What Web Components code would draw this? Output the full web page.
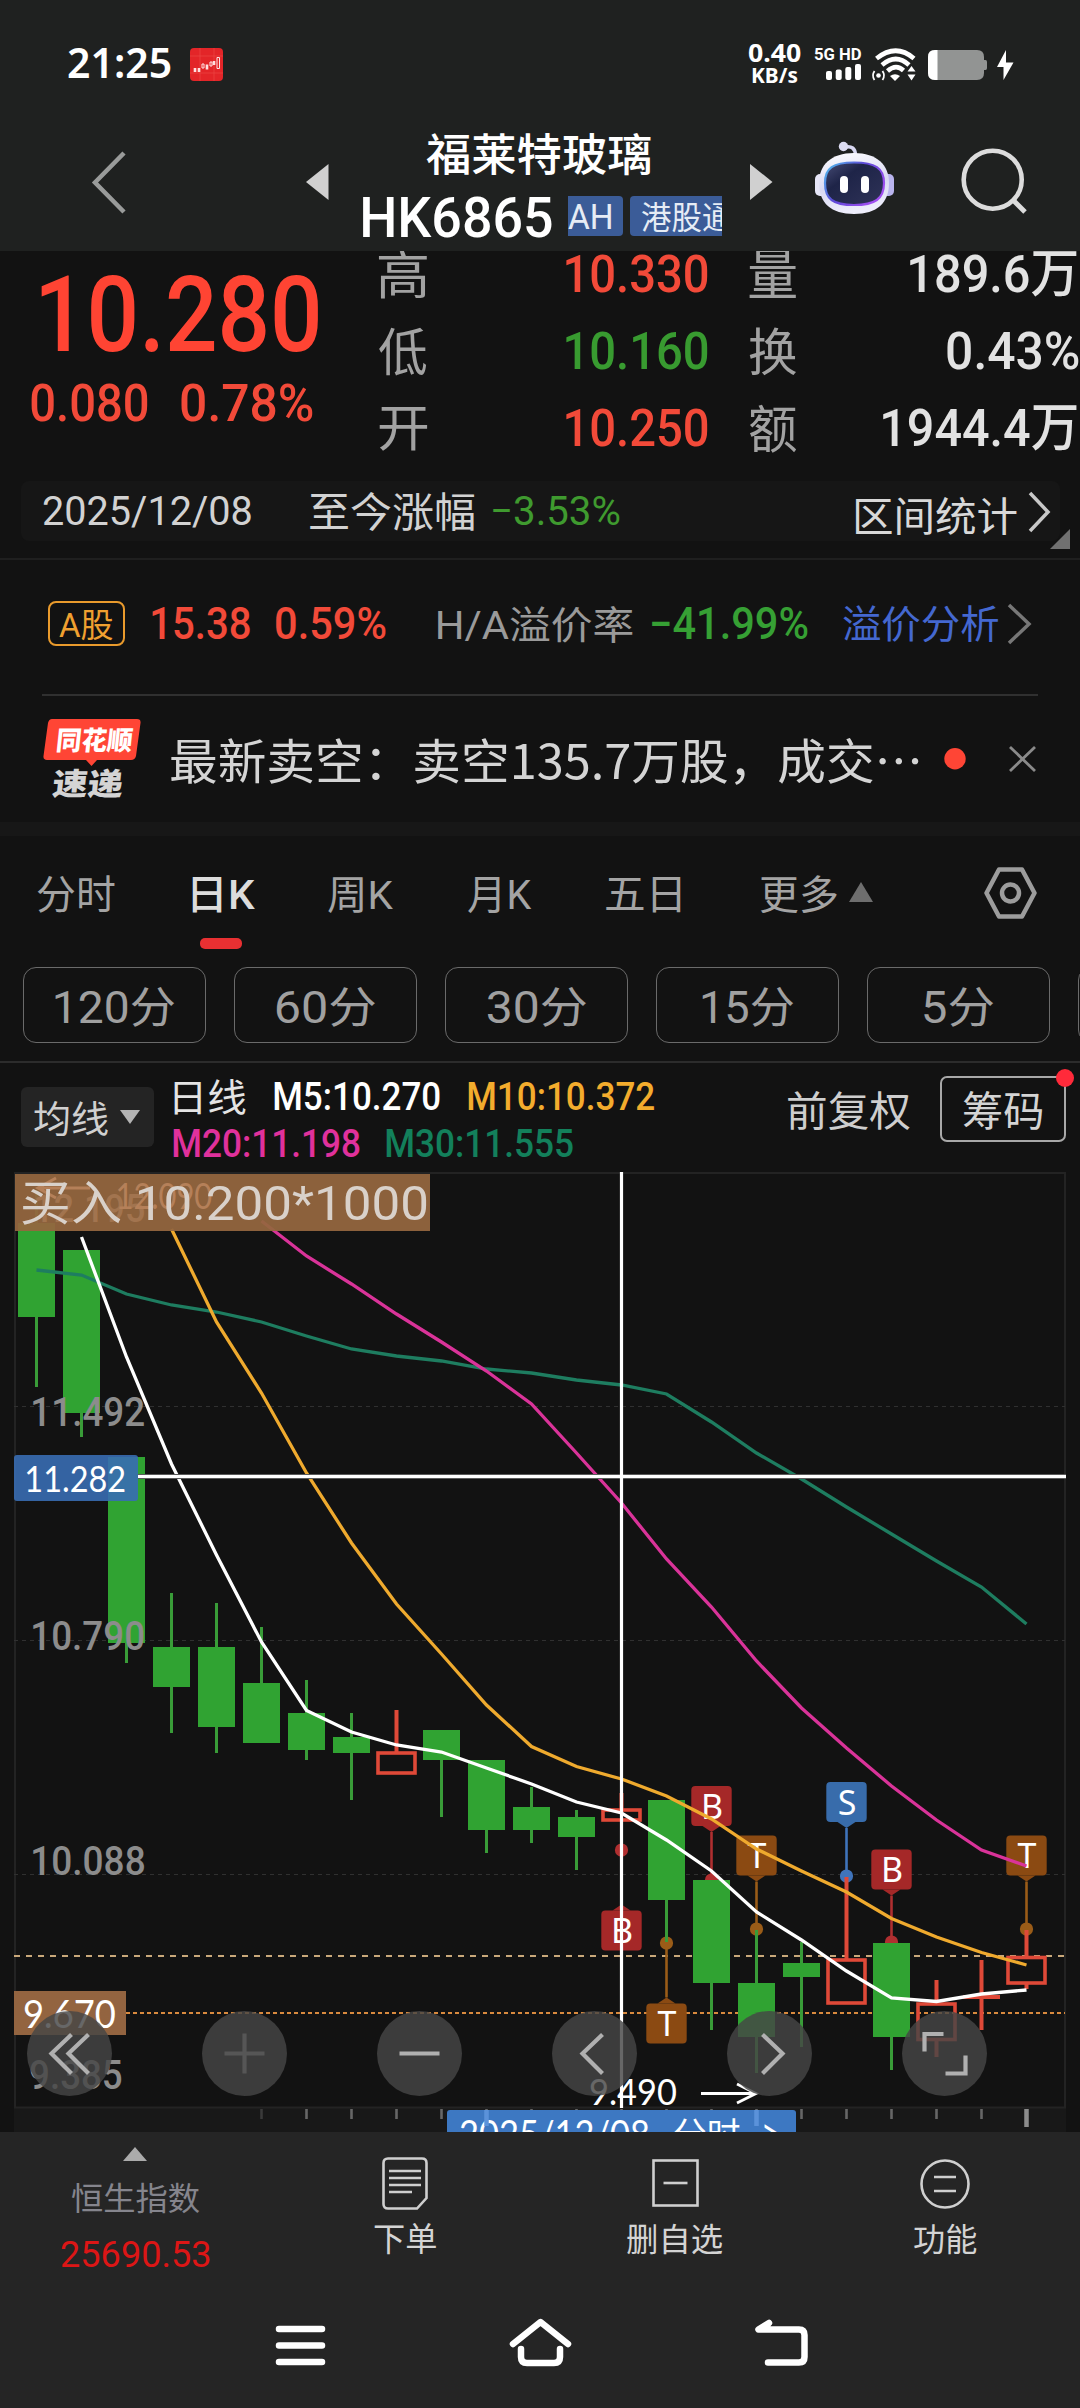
<!DOCTYPE html>
<html lang="zh-CN">
<head>
<meta charset="utf-8">
<title>福莱特玻璃 HK6865</title>
<style>
  html, body { margin: 0; background: #121212; }
  body { width: 1080px; height: 2408px; overflow: hidden; }
</style>
</head>
<body>
<stock-app></stock-app>

<script>
const FONTS = {
  din: 'Roboto, "Noto Sans CJK SC", sans-serif',
  ui: 'Lato, "Noto Sans CJK SC", sans-serif',
  sys: '"Noto Sans", "Noto Sans CJK SC", sans-serif',
  cjk: '"Noto Sans CJK SC", sans-serif'
};
const pen = document.createElement("canvas").getContext("2d");

// Text whose box is its ink: w and h are the width and height of the visible glyphs.
// "by" names the characters that h is measured on, when it is not the whole text.
class FitText extends HTMLElement {
  connectedCallback() {
    if (this.shadowRoot) return;
    const root = this.attachShadow({ mode: "open" });
    const text = this.textContent;
    const w = +this.getAttribute("w");
    const h = +this.getAttribute("h");
    const by = this.getAttribute("by") || text;
    const weight = this.getAttribute("weight") || 400;
    const family = FONTS[this.getAttribute("font") || "din"];

    pen.font = `${weight} 200px ${family}`;
    let m = pen.measureText(by);
    const size = (h * 200) / (m.actualBoundingBoxAscent + m.actualBoundingBoxDescent);
    pen.font = `${weight} ${size}px ${family}`;
    const top = pen.measureText(by).actualBoundingBoxAscent;
    m = pen.measureText(text);
    const sx = w / (m.actualBoundingBoxLeft + m.actualBoundingBoxRight);
    const a = m.fontBoundingBoxAscent;
    const d = m.fontBoundingBoxDescent;
    const dy = top - ((h - a - d) / 2 + a);
    const dx = m.actualBoundingBoxLeft * sx;

    root.innerHTML = `
      <style>
        :host { display: block; flex: none; width: ${w}px; height: ${h}px; }
        span {
          display: block;
          width: max-content;
          white-space: pre;
          font: ${weight} ${size}px/${h}px ${family};
          transform-origin: 0 0;
          transform: translate(${dx}px, ${dy}px) scaleX(${sx});
        }
      </style>
      <span><slot></slot></span>`;
  }
}
customElements.define("fit-text", FitText);

// l and t are the gaps to the item before and to the top of the row
const txt = (text, w, h, l, t, color, more = "") =>
  `<fit-text w="${w}" h="${h}" ${more} style="margin:${t}px 0 0 ${l}px;color:${color}">${text}</fit-text>`;

const define = (name, css, html) => {
  customElements.define(name, class extends HTMLElement {
    connectedCallback() {
      if (this.shadowRoot) return;
      this.attachShadow({ mode: "open" }).innerHTML =
        `<style>:host{display:flex;align-items:flex-start;box-sizing:border-box}
         svg{display:block;flex:none;overflow:visible}${css}</style>${html}`;
    }
  });
};

const RED = "#f24a39";
const GREEN = "#389b30";
const M = 'weight="500"';

define("status-bar", `
  :host { height: 120px; background: #1f2120; }
  .speed { margin: 44px 0 0 524.5px; }
  .net { margin: 47.5px 0 0 13px; }
`, `
  ${txt("21:25", 103, 31.5, 68, 47.5, "#fff", 'weight="600" font="sys"')}
  <svg width="33" height="33" style="margin:48px 0 0 19px">
    <rect width="33" height="33" rx="4" fill="#e32528"/>
    <path d="M0 8H33M0 25H33M10 0V33M24 0V33" stroke="#ee4b48" stroke-width=".6"/>
    <path d="M5 20v4M9 20v4M17 16.500v5M24 13v4" stroke="#ffe0e0" stroke-width="2.600"/>
    <path d="M12 16h2v4h-2zM20 14h2v4h-2zM27 9.500h2.500v11h-2.500z" fill="none" stroke="#ffe4e4" stroke-width="1"/>
  </svg>
  <div class="speed">
    ${txt("0.40", 53, 18.5, 0, 0, "#fff", 'weight="700" font="sys"')}
    ${txt("KB/s", 45, 15.5, 4.5, 5, "#fff", 'weight="700" font="sys" by="K"')}
  </div>
  <div class="net">
    ${txt("5G HD", 47, 12, 0, 0, "#fff", 'weight="700"')}
    <svg width="35" height="16" style="margin:4.500px 0 0 12px" fill="#fff">
      <rect y="7" width="6" height="9" rx="2"/><rect x="9.700" y="5.500" width="6" height="10.500" rx="2"/>
      <rect x="19.300" y="3" width="6" height="13" rx="2"/><rect x="29" width="6" height="16" rx="2"/>
    </svg>
  </div>
  <svg width="44" height="32" style="margin:49px 0 0 11px">
    <g fill="none" stroke="#fff" stroke-width="4.600">
      <path d="M4.500 9.500Q24 -6 42 9.500"/><path d="M10 16Q24 4 37 16"/><path d="M15.500 22Q24 14.500 31.500 21.500"/>
    </g>
    <path d="M18 27Q23 23.500 28 27L23 32Z" fill="#fff"/>
    <path d="M35.500 22.500L39.500 17L43.500 22.500ZM35.500 25.500L39.500 31.500L43.500 25.500Z" fill="#fff"/>
    <circle cx="6.500" cy="26.500" r="2.300" fill="#fff"/>
    <path d="M2.500 22q-3 4.500 0 9M10.500 22q3 4.500 0 9" fill="none" stroke="#fff" stroke-width="1.800"/>
  </svg>
  <svg width="60" height="30" style="margin:50px 0 0 12px">
    <path d="M7 0H49q7 0 7 7V23q0 7 -7 7H7q-7 0 -7 -7V7q0 -7 7 -7ZM56 10h1.500q1.500 0 1.500 2v6q0 2 -1.500 2H56Z" fill="#929493"/>
    <path d="M9.500 0V30H7q-7 0 -7 -7V7q0 -7 7 -7Z" fill="#fff"/>
  </svg>
  <svg width="17" height="30" style="margin:50px 0 0 9px"><path d="M9 0L0 17H6.500V30L16.500 12.500H9Z" fill="#fff"/></svg>
`);

define("stock-header", `
  :host { height: 131px; background: #1f2120; position: relative; }
  .name { flex: none; width: 422px; height: 131px; }
  .row { display: flex; align-items: flex-start; overflow: hidden; width: 359px; height: 42px; margin: 22px 0 0 34px; }
  .tag { display: flex; align-items: flex-start; flex: none; height: 40px; background: #3b5c98; border-radius: 4px; }
`, `
  <svg width="34" height="62" style="margin:32px 0 0 92px"><path d="M32 1L3 30.500L32 60" fill="none" stroke="#999b9a" stroke-width="4.500"/></svg>
  <svg width="23" height="36" style="margin:43.500px 0 0 179.500px"><path d="M0 18L22.500 0V36Z" fill="#d0d0d0"/></svg>
  <div class="name">
    ${txt("福莱特玻璃", 225, 42, 97.5, 11.5, "#fff", M)}
    <div class="row">
      ${txt("HK6865", 189, 41, 0, 0, "#fff", M)}
      <div class="tag" style="width:55px;margin-left:16px;border-radius:0 4px 4px 0">${txt("AH", 43, 25, 0, 8, "#e6ecf5")}</div>
      <div class="tag" style="width:110px;margin-left:7px">${txt("港股通", 90, 29, 12, 6, "#e6ecf5")}</div>
    </div>
  </div>
  <svg width="23" height="36" style="margin:43.500px 0 0 -.5px"><path d="M22.500 18L0 0V36Z" fill="#d0d0d0"/></svg>
  <svg width="79" height="74" style="margin:21px 0 0 42px">
    <defs>
      <linearGradient id="shell" x1="0" y1="0" x2=".2" y2="1"><stop stop-color="#fdfdff"/><stop offset=".6" stop-color="#d9d9f2"/><stop offset="1" stop-color="#ededfb"/></linearGradient>
      <linearGradient id="rim" x1="0" y1="0" x2="1" y2=".6"><stop stop-color="#4fc3ee"/><stop offset=".5" stop-color="#5d49d8"/><stop offset="1" stop-color="#a04ff0"/></linearGradient>
      <linearGradient id="face" x1="0" y1="0" x2="1" y2="1"><stop stop-color="#474c76"/><stop offset=".35" stop-color="#1e2448"/><stop offset="1" stop-color="#2f3358"/></linearGradient>
    </defs>
    <path d="M30 6Q40 4 40.500 14" fill="none" stroke="#d8d8f2" stroke-width="3.500"/>
    <circle cx="28.500" cy="5.500" r="4.700" fill="#dcdcf2"/>
    <rect y="33" width="12" height="22" rx="5" fill="#e6e6f7"/><rect x="67" y="33" width="12" height="22" rx="5" fill="#b9b4ee"/>
    <path d="M39 12C62 12 74 24 74 42C74 62 62 73 39 73C16 73 4 62 4 42C4 24 16 12 39 12Z" fill="url(#shell)"/>
    <path d="M39 21.500C60 21.500 69 27 69 42C69 58 60 64 39 64C18 64 10 58 10 42C10 27 18 21.500 39 21.500Z" fill="url(#face)" stroke="url(#rim)" stroke-width="2.200"/>
    <rect x="25" y="35" width="8" height="17" rx="4" fill="#fff"/><rect x="46" y="35" width="8" height="17" rx="4" fill="#fff"/>
  </svg>
  <svg width="66" height="66" style="margin:28px 0 0 67px"><circle cx="31.700" cy="31.700" r="29" fill="none" stroke="#dcdcdc" stroke-width="4.600"/><path d="M52 52L64 64" stroke="#dcdcdc" stroke-width="5"/></svg>
`);

const quoteRow = (a, b, bw, color, c, d, dw, last, gap) => `
  <div class="row" style="margin-top:${gap}px">
    ${txt(a, 48, a === "开" ? 44 : 47.5, 0, a === "开" ? 3 : 0, "#a2a2a2")}
    ${txt(b, bw, 38.5, 139, 4.5, color, M)}
    ${txt(c, 47.5, 47.5, 41, 0, "#a2a2a2")}
    ${txt(d, dw, 38.5, last, 4.5, "#e2e2e2", 'weight="500" by="0"')}
  </div>`;

define("quote-panel", `
  :host { height: 230px; overflow: hidden; }
  .price { flex: none; width: 379px; }
  .row { display: flex; align-items: flex-start; }
  .grid { flex: none; width: 701px; }
`, `
  <div class="price">
    ${txt("10.280", 277, 78, 41, 24, "#ff4433", M)}
    <div class="row">${txt("0.080", 117, 38.5, 31, 29.5, RED, M)}${txt("0.78%", 132, 38.5, 33, 29.5, RED, M)}</div>
  </div>
  <div class="grid">
    ${quoteRow("高", "10.330", 142, RED, "量", "189.6万", 167, 113.5, -1.5)}
    ${quoteRow("低", "10.160", 142, GREEN, "换", "0.43%", 132, 150, 29.5)}
    ${quoteRow("开", "10.250", 142, RED, "额", "1944.4万", 194, 86, 29.5)}
  </div>
`);

define("date-strip", `
  :host { height: 79px; border-bottom: 2px solid #1f1f1f; }
  .box { display: flex; align-items: flex-start; flex: none; width: 1039px; height: 60px; margin-left: 21px; background: #161616; border-radius: 8px; }
`, `
  <div class="box">
    ${txt("2025/12/08", 208, 30, 22, 14.5, "#d2d2d2", 'by="0"')}
    ${txt("至今涨幅", 164, 38.5, 59, 10, "#d2d2d2")}
    ${txt("−3.53%", 127, 30, 19, 14.5, "#3f9a2f", 'by="0"')}
    ${txt("区间统计", 162, 37.5, 235, 14.5, "#d8d8d8")}
    <svg width="21" height="40" style="margin:10.500px 0 0 12px"><path d="M1 1L19 20L1 39" fill="none" stroke="#c8c8c8" stroke-width="3.500"/></svg>
  </div>
  <svg width="20" height="20" style="margin:48px 0 0 -10px"><path d="M20 0V20H0Z" fill="#707070"/></svg>
`);

define("ah-strip", `
  :host { height: 136px; margin: 0 42px; border-bottom: 2px solid #303030; }
  .badge { display: flex; align-items: flex-start; flex: none; box-sizing: border-box; width: 77px; height: 45px; margin: 41px 0 0 6px; border: 2px solid #e99a2c; border-radius: 8px; }
`, `
  <div class="badge">${txt("A股", 54, 29, 9, 6.5, "#f0a030")}</div>
  ${txt("15.38", 98, 32, 27, 47, RED, M)}
  ${txt("0.59%", 110, 32, 26, 47, RED, M)}
  ${txt("H/A溢价率", 195, 36, 52, 45, "#9a9a9a")}
  ${txt("−41.99%", 156, 32, 19, 47, "#36a034", 'weight="500" by="0"')}
  ${txt("溢价分析", 155, 36, 35, 45, "#4468d0")}
  <svg width="23" height="40" style="margin:44px 0 0 10px"><path d="M1 1L21 20L1 39" fill="none" stroke="#777" stroke-width="3.500"/></svg>
`);

define("news-strip", `
  :host { height: 140px; border-bottom: 14px solid #171717; }
  .logo { flex: none; width: 98px; height: 84px; margin: 23px 0 0 42.5px; position: relative; }
  .logo > div { position: absolute; left: 11px; top: 8px; transform: skewX(-6deg); }
`, `
  <div class="logo">
    <svg width="98" height="48"><path d="M9 0H94q4 0 3.500 4L93 37q-1 4 -5 4H54L48.500 47L43 41H4q-4 0 -3.500 -4L5 4q1 -4 4 -4Z" fill="#ff4535"/></svg>
    <div>${txt("同花顺", 75, 25.5, 1, 0, "#fff", 'weight="900"')}${txt("速递", 71, 30, 1, 14.5, "#d4d4d4", 'weight="900"')}</div>
  </div>
  ${txt("最新卖空：卖空135.7万股，成交…", 748, 46.5, 30, 41.5, "#d4d4d4", 'font="cjk"')}
  <svg width="22" height="22" style="margin:52px 0 0 25px"><circle cx="11" cy="10.700" r="10.700" fill="#ff4535"/></svg>
  <svg width="25" height="24" style="margin:51px 0 0 44.500px"><path d="M0 0L25 24M25 0L0 24" stroke="#8a8a8a" stroke-width="2.800"/></svg>
`);

define("period-tabs", `
  :host { height: 131px; }
  .on { flex: none; width: 63px; height: 90px; margin-left: 77px; }
  i { display: block; width: 42px; height: 11px; margin: 26px 0 0 8px; border-radius: 5px; background: #e83032; }
`, `
  ${txt("分时", 78, 37, 37, 39, "#a4a4a4")}
  <div class="on">${txt("日K", 63, 35, 0, 41, "#dcdcdc", M)}<i></i></div>
  ${txt("周K", 65, 35, 73, 41, "#a4a4a4")}
  ${txt("月K", 64, 35, 75, 41, "#a4a4a4")}
  ${txt("五日", 75, 35, 74, 41, "#a4a4a4")}
  ${txt("更多", 77, 37, 79, 39, "#a4a4a4")}
  <svg width="24" height="20" style="margin:46px 0 0 12px"><path d="M12 0L24 20H0Z" fill="#6e6e6e"/></svg>
  <svg width="53" height="52" style="margin:31px 0 0 111px" fill="none" stroke="#9c9c9c" stroke-width="4.500">
    <path d="M15 2.500H38L50.500 26L38 49.500H15L2.500 26Z" stroke-linejoin="round"/><circle cx="26.500" cy="26" r="8.500"/>
  </svg>
`);

define("chip-button", `
  :host { flex: none; justify-content: center; width: 183px; height: 76px; padding-top: 18.5px; border: 1.5px solid #6a6a6a; border-radius: 13px; }
`, `<slot></slot>`);

define("minute-chips", `
  :host { height: 96px; gap: 28px; padding-left: 23px; overflow: hidden; border-bottom: 2px solid #2c2c2c; }
`, [["120分", 119], ["60分", 99], ["30分", 98], ["15分", 91], ["5分", 69], ["", 0]]
  .map(([t, w]) => `<chip-button>${t && txt(t, w, 40, 0, 0, "#a0a0a0")}</chip-button>`).join(""));

define("ma-legend", `
  :host { height: 107px; }
  .pick { display: flex; align-items: flex-start; flex: none; width: 133px; height: 60px; margin: 24px 0 0 21px; background: #242424; border-radius: 6px; }
  .list { flex: none; width: 615px; height: 107px; }
  .list div { display: flex; align-items: flex-start; }
  .chips { position: relative; display: flex; align-items: flex-start; flex: none; box-sizing: border-box; width: 126px; height: 66px; margin: 13px 0 0 30px; border: 2px solid #a8a8a8; border-radius: 7px; }
  .chips i { position: absolute; right: -10px; top: -9px; width: 18px; height: 18px; border-radius: 50%; background: #ff2a3a; }
`, `
  <div class="pick">${txt("均线", 74, 34.5, 13, 14, "#d0d0d0")}<svg width="20" height="14" style="margin:23px 0 0 12px"><path d="M0 0H20L10 14Z" fill="#b4b4b4"/></svg></div>
  <div class="list">
    <div style="height:52px">
      ${txt("日线", 72, 35, 19.5, 15, "#e4e4e4")}
      ${txt("M5:10.270", 166, 29, 28.5, 18.5, "#fff", M)}
      ${txt("M10:10.372", 186, 29, 28, 18.5, "#f3ac2d", M)}
    </div>
    <div style="height:50px">
      ${txt("M20:11.198", 187, 28.5, 18.5, 15, "#e0319c", M)}
      ${txt("M30:11.555", 187, 28.5, 26.5, 15, "#13805b", M)}
    </div>
  </div>
  ${txt("前复权", 122, 38.5, 18.5, 28, "#cecece")}
  <div class="chips">${txt("筹码", 79, 38.5, 21, 13, "#d4d4d4")}<i></i></div>
`);

// ---- candle chart ----
const X = i => 36.5 + 45 * i;
// [high, top, bottom, low, up]
const CANDLES = [
  [1190, 1223, 1317, 1387], [1250, 1250, 1413, 1437], [1457, 1457, 1643, 1663],
  [1593, 1647, 1687, 1733], [1603, 1647, 1727, 1753], [1627, 1683, 1743, 1743],
  [1680, 1713, 1750, 1760], [1713, 1737, 1753, 1800], [1710, 1753, 1773, 1773, 1],
  [1730, 1730, 1760, 1817], [1760, 1760, 1830, 1853], [1787, 1807, 1830, 1843],
  [1810, 1817, 1837, 1870], [1793, 1810, 1820, 1820, 1], [1800, 1800, 1900, 1942],
  [1880, 1880, 1983, 2030], [1930, 1983, 2037, 2073], [1942, 1963, 1977, 2047],
  [1877, 1960, 2003, 2003, 1], [1943, 1943, 2037, 2070], [1980, 2004, 2039.5, 2057, 1],
  [1960, 1997, 1997, 2030, 1], [1930, 1957.5, 1983, 1989, 1]
];
const LINES = [
  ["#1e7d60", 0, [1270, 1275, 1294, 1305, 1312, 1322, 1336, 1349, 1356, 1361, 1369, 1373, 1380, 1385, 1394, 1422, 1453, 1479, 1507, 1534, 1561, 1587, 1624]],
  ["#d93399", 5, [1221, 1256, 1284, 1314, 1342, 1371, 1404, 1453, 1503, 1559, 1607, 1661, 1708, 1748, 1786, 1820, 1850, 1866]],
  ["#efaa2e", 3, [1229, 1322, 1393, 1473, 1543, 1604, 1654, 1705, 1746.5, 1766.5, 1779, 1796, 1819, 1849, 1871, 1892, 1918.5, 1937, 1952.5, 1965]],
  ["#ffffff", 1, [1237, 1357, 1464, 1555, 1642, 1710.5, 1732, 1745, 1752, 1768, 1784, 1802, 1813, 1840, 1871, 1912, 1940, 1971, 1998, 2001.5, 1994, 1990]]
];
const MARKS = [
  ["B", 13, 1910.5, 1850, "#a52828"], ["T", 14, 2003.5, 1943, "#8b4a12"],
  ["B", 15, 1786, 1880, "#a52828"], ["T", 16, 1835.5, 1929, "#8b4a12"],
  ["S", 18, 1782, 1876, "#386cab"], ["B", 19, 1849.5, 1942, "#a52828"],
  ["T", 22, 1835.5, 1929, "#8b4a12"]
];

const drawCandle = ([high, top, bottom, low, up], i) => {
  const x = X(i);
  if (!up) {
    return `<path d="M${x} ${high}V${low}" stroke="#399c38" stroke-width="3"/>
      <rect x="${x - 18.5}" y="${top}" width="37" height="${bottom - top}" fill="#30a332"/>`;
  }
  if (top === bottom) {
    return `<path d="M${x} ${high}V${low}M${x - 18.5} ${top}H${x + 18.5}" stroke="#df4938" stroke-width="4"/>`;
  }
  return `<path d="M${x} ${high}V${top}M${x} ${bottom}V${low}" stroke="#df4938" stroke-width="4"/>
    <rect x="${x - 18.5}" y="${top}" width="37" height="${bottom - top}" fill="none" stroke="#df4938" stroke-width="3.600"/>`;
};
const drawMark = ([letter, i, y, dot, color]) => {
  const x = X(i);
  const below = dot < y;
  const edge = below ? y : y + 40;
  const tip = below ? edge - 6 : edge + 6;
  const stem = letter === "T" ? "#9a5c18" : letter === "S" ? "#3f74bb" : "#b02f30";
  return `<path d="M${x} ${tip}V${dot}" stroke="${stem}" stroke-width="2.600"/>
    <circle cx="${x}" cy="${dot}" r="6.600" fill="${stem}"/>
    <path d="M${x - 9} ${edge}L${x} ${tip}L${x + 9} ${edge}Z" fill="${color}"/>
    <rect x="${x - 20.2}" y="${y}" width="40.400" height="40" rx="4" fill="${color}"/>
    <text x="${x + 0.5}" y="${y + 32.5}" text-anchor="middle" fill="#fff">${letter}</text>`;
};
const ticks = CANDLES.map((c, i) => i < 5 ? "" : i === 22
  ? `<path d="M${X(i)} 2109V2127" stroke="#8c8c8c" stroke-width="4.500"/>`
  : `<path d="M${X(i)} 2109V2119" stroke="${i === 5 ? "#3a3a3a" : "#676767"}" stroke-width="2.600"/>`).join("");

const at = (x, y, text, w, h, color, more = "") =>
  `<div class="at" style="left:${x}px;top:${y - 1170}px">${txt(text, w, h, 0, 0, color, more)}</div>`;
const round = (x, d, color = "#b0b0b0") =>
  `<g transform="translate(${x} 2053.500)"><circle r="42.500" fill="#464646" fill-opacity=".82"/>
    <path d="${d}" fill="none" stroke="${color}" stroke-width="4.200"/></g>`;

define("k-chart", `
  :host { display: block; position: relative; height: 962px; overflow: hidden; }
  svg { position: absolute; left: 0; top: 0; }
  text { font: 400 34px "Noto Sans", sans-serif; }
  .at { position: absolute; }
  .tag { position: absolute; box-sizing: border-box; }
`, `
  <svg width="1080" height="962" viewBox="0 1170 1080 962">
    <rect x="14" y="2108" width="1052" height="24" fill="#181818"/>
    <rect x="15" y="1173" width="1050" height="934.500" fill="none" stroke="#232323" stroke-width="2"/>
    <path d="M14 1406.500H1065M14 1640.500H1065M14 1874.500H1065" stroke="#303030" stroke-dasharray="4 4"/>
    <path d="M14 1956H1065" stroke="#c9a87a" stroke-width="2" stroke-dasharray="6 6"/>
    <path d="M14 2013H1065" stroke="#d98a3e" stroke-width="2" stroke-dasharray="4 3"/>
    ${ticks}
    ${MARKS.map(drawMark).join("")}
    ${CANDLES.map(drawCandle).join("")}
    ${LINES.map(([c, s, ys]) => `<polyline points="${ys.map((y, k) => `${X(s + k)},${y}`).join(" ")}" fill="none" stroke="${c}" stroke-width="3.300"/>`).join("")}
    <path d="M138 1476.500H1066" stroke="#5a5a5a" stroke-width="5"/>
    <path d="M138 1476.500H1066M621.500 1172V2108" stroke="#fff" stroke-width="3.200"/>
    <path d="M701 2093.500H756M737 2084L756 2093.500L737 2103" fill="none" stroke="#fff" stroke-width="2.800"/>
  </svg>
  ${at(33, 1397, "11.492", 111, 30, "#8c8c8c", M)}
  ${at(33, 1621, "10.790", 111, 30, "#8c8c8c", M)}
  ${at(33, 1845.5, "10.088", 111, 29.5, "#8c8c8c", M)}
  ${at(30, 2059.5, "9.385", 92, 29.5, "#8c8c8c", M)}
  ${at(590, 2079, "9.490", 86, 26.5, "#fff", 'font="ui"')}
  <div class="tag" style="left:15px;top:4px;width:415px;height:57px;background:rgba(148,102,63,.94)"></div>
  ${at(36, 1194, "12.195", 108, 29, "#a2744f", M)}
  ${at(118, 1183, "12.090", 94, 27, "#b58059", 'font="ui"')}
  <svg width="1080" height="70"><path d="M90 18H38M56 8L38 18L56 28" fill="none" stroke="#b58059" stroke-width="3"/></svg>
  ${at(21.5, 1181, "买入 10.200*1000", 404, 43, "#d9d1ca", 'by="买入"')}
  <div class="tag" style="left:14px;top:285px;width:124px;height:46px;border-radius:3px;background:rgba(56,109,178,.9)"></div>
  ${at(27, 1466, "11.282", 98, 27, "#fff", 'font="ui"')}
  <div class="tag" style="left:14px;top:821px;width:112px;height:44px;background:#936440"></div>
  ${at(24, 2000, "9.670", 91, 28, "#fff", 'font="ui"')}
  <div class="tag" style="left:447px;top:940px;width:348.5px;height:40px;border-radius:3px;background:#3d78c2"></div>
  ${at(460, 2120, "2025/12/08", 189, 28, "#fff", 'font="ui" by="0"')}
  ${at(674, 2118, "分时", 66, 32, "#fff")}
  ${at(764, 2124, "&gt;", 14, 18, "#fff", 'font="ui"')}
  <svg width="1080" height="962" viewBox="0 1170 1080 962">
    <path d="M486.500 2110V2126M756.500 2110V2126" stroke="#5b92da" stroke-width="4.500"/>
    ${round(69.5, "M2 -19L-18 0L2 20M19 -19L-1 0L19 20")}
    ${round(244.5, "M-20 0H20M0 -20V20", "#565656")}
    ${round(419.5, "M-20 0H20")}
    ${round(594.5, "M8 -19L-12 0L8 20")}
    ${round(769.5, "M-7 -19L13 0L-7 20")}
    ${round(944.5, "M-1 -19.500H-20V-2M21 2V20H1")}
  </svg>
`);

define("bottom-bar", `
  :host { height: 157px; background: #252525; }
  div { display: flex; flex-direction: column; align-items: center; width: 270px; }
`, `
  <div>
    <svg width="24" height="14" style="margin-top:15px"><path d="M12 0L24 14H0Z" fill="#ababab"/></svg>
    ${txt("恒生指数", 129, 30, 0, 21, "#85858d")}
    ${txt("25690.53", 149, 27, 0, 29, "#dc1616")}
  </div>
  <div>
    <svg width="46" height="53" style="margin-top:25px" fill="none" stroke="#cfcfcf" stroke-width="2.600">
      <path d="M6 1.500H40q4.500 0 4.500 4.500V41L35 51.500H6q-4.500 0 -4.500 -4.500V6q0 -4.500 4.500 -4.500Z"/>
      <path d="M7 14H39M7 21H39M7 28H39M7 35H30"/>
    </svg>
    ${txt("下单", 62, 30, 0, 13, "#d4d4d4")}
  </div>
  <div>
    <svg width="47" height="48" style="margin-top:27px" fill="none" stroke="#cfcfcf" stroke-width="2.600"><rect x="1.500" y="1.500" width="44" height="45"/><path d="M11.500 24H35.500"/></svg>
    ${txt("删自选", 96, 30, 0, 16, "#d4d4d4")}
  </div>
  <div>
    <svg width="50" height="50" style="margin-top:26.500px" fill="none" stroke="#cfcfcf" stroke-width="2.600"><circle cx="25" cy="25" r="23.500"/><path d="M14 18H36M14 32H36"/></svg>
    ${txt("功能", 63, 30, 0, 14.5, "#d4d4d4")}
  </div>
`);

define("nav-bar", `
  :host { height: 119px; background: #252525; }
  svg { fill: none; stroke: #fff; stroke-width: 6.5; stroke-linecap: round; stroke-linejoin: round; }
`, `
  <svg width="51" height="42" style="margin:36px 0 0 275px"><path d="M4 4H47M4 20.500H47M4 37H47"/></svg>
  <svg width="63" height="50" style="margin:29px 0 0 183px"><path d="M4 26L31.500 4L59 26M12 31V39q0 6 6 6H45q6 0 6 -6V31"/></svg>
  <svg width="54" height="48" style="margin:30px 0 0 182px"><path d="M15 4L4.500 10.500H45q5.500 0 5.500 5.500V38q0 5.500 -5.500 5.500H14"/><path d="M4 10L15 3V10Z" fill="#fff" stroke-width="3"/></svg>
`);

define("stock-app", `:host { flex-direction: column; align-items: stretch; }`, `
  <status-bar></status-bar>
  <stock-header></stock-header>
  <quote-panel></quote-panel>
  <date-strip></date-strip>
  <ah-strip></ah-strip>
  <news-strip></news-strip>
  <period-tabs></period-tabs>
  <minute-chips></minute-chips>
  <ma-legend></ma-legend>
  <k-chart></k-chart>
  <bottom-bar></bottom-bar>
  <nav-bar></nav-bar>
`);
</script>
</body>
</html>
